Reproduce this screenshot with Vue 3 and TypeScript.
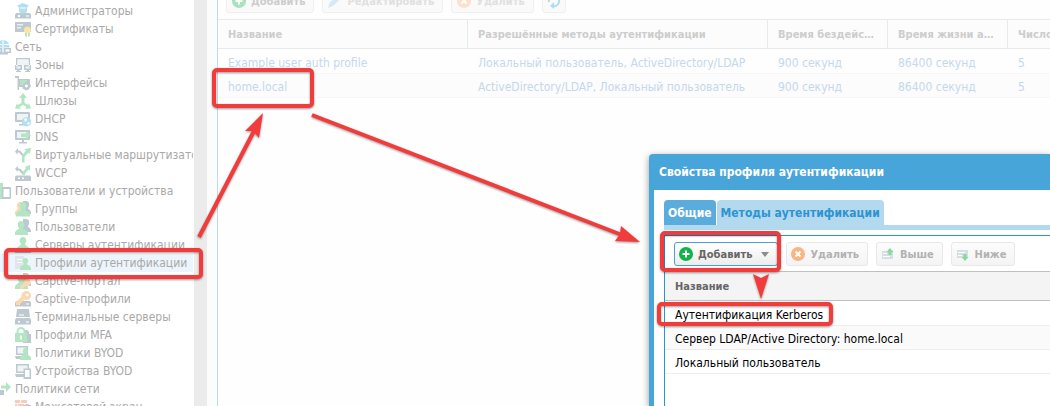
<script setup lang="ts">
type Shape = [fill: string, d: string]
interface TreeRow {
  label: string
  icon: string
  group?: boolean
  selected?: boolean
}

const slate = '#bdc9d1'
const pale = '#e9eef1'
const green = '#b2e6c3'
const blue = '#b3dff2'
const orange = '#fbd8ae'
const white = '#ffffff'

const person =
  'M8 1c2 0 3.400 1.500 3.400 3.600S10.200 8 10 8.800c-.2 1.400 5 1.400 5 5.200v1.500H1V14c0-3.800 5.200-3.800 5-5.200C5.800 8 4.600 6.700 4.600 4.600S6 1 8 1z'
const personSmall =
  'M10.500 3c1.500 0 2.600 1.200 2.600 2.800s-1 2.500-1.100 3.200c-.1 1.200 4 1.300 4 4.500V15H5v-1.500C5 10.300 9.100 10.200 9 9c-.1-.7-1.100-1.600-1.100-3.200S9 3 10.500 3z'
const personRight =
  'M11 0c2 0 3.200 1.400 3.200 3.300S13.200 6.500 13 7.300c-.2 1.200 3 1.500 3 4.700v1H8V0z'
const personLeft =
  'M6 2c2 0 3.300 1.400 3.300 3.300S8.200 8.500 8 9.300c-.2 1.400 5 1.400 5 5.200V16H0v-1.500c0-3.800 4.200-3.800 4-5.200-.2-.8-1.300-2.100-1.300-4S4 2 6 2z'
const rack = 'M1 10h14l1 2v3.500H0V12zM3 12v2h2v-2zM11 12.500h3v1h-3z'
const screen = 'M1 1h13a1 1 0 0 1 1 1v8a1 1 0 0 1-1 1H9v2h3v1.500H4V13h3v-2H1a1 1 0 0 1-1-1V2a1 1 0 0 1 1-1z'
const key = 'M11 0a4.500 4.500 0 1 1-1.500 8.500L4 14H1v-3l5.700-5.500A4.500 4.500 0 0 1 11 0zM12 2.500a1.500 1.500 0 1 0 .1 0z'
const fork = 'M7 14V9L4 5.500H2.500V8L0 4.500 3 1v2.500h2L8.500 7.500V14z'
const forkGreen = 'M7 15.500V8.500l4-5-1.500-1.500L16 1l-1 6-1.500-1.500L9.500 10v5.500z'

const icons: Record<string, Shape[]> = {
  admin: [
    [slate, rack],
    [blue, 'M8 0l6 2.500-2 2v3a4 3 0 0 1-8 0v-3l-2-2z'],
    [white, 'M5 4.500h6v1H5z'],
  ],
  cert: [
    [slate, 'M0 1h16v10H0z'],
    [pale, 'M2 3h6v1.500H2zM2 6h4v1.500H2z'],
    [green, 'M10 11h2v5l-2-1zM13 11h2v4l-2 1z'],
    ['#fde6a3', 'M12.500 5.500a3.500 3.500 0 1 1-.1 0z'],
  ],
  net: [
    [blue, 'M8 1a6.500 6.500 0 1 1-.1 0z'],
    [white, 'M7.500 1h1v12h-1zM2 5h12v1H2zM2 8.500h12v1H2z'],
    [slate, 'M1 9h6v5H1zM9 9h7v5H9zM4 14h9v1.500H4z'],
    [white, 'M2.500 10.500h3v2h-3zM10.500 10.500h4v2h-4z'],
  ],
  zones: [
    [slate, 'M1 1h14v8h-1.500V2.500h-11V9H1zM0 8h7v5H4.500v1H6v1H1v-1h1v-1H0zM9 8h7v5h-2v1h1v1h-5v-1h1.500v-1H9z'],
    ['#f1f4f7', 'M2.500 2.500h11V8H9v1H7V8H2.500zM1.500 9.500h4v2h-4zM10.500 9.500h4v2h-4z'],
  ],
  iface: [
    [slate, 'M0 1h4v3h11v8H4v3H2.500V3H0z'],
    [green, 'M5 5h7v5H5z'],
    [slate, 'M11 6.500l2 .2.500 1.300 1.500.300.5 2 .5 1.500-1.500 1-.5 1.700-2 .5-1.500.5-1.500-1.200-1.500-.8V11l.5-1.700 1-.8z'],
    [white, 'M11.500 9.500a1.500 1.500 0 1 1-.1 0z'],
  ],
  gateway: [[green, 'M6.500 10V5H4l4-5 4 5H9.500v5l4 2 .5-2 2 5.500-6 .5 1.500-2L8 12l-3.500 2L6 16l-6-.5L2 10l.5 2z']],
  dhcp: [
    [slate, screen],
    ['#f1f4f7', 'M2 3h11v6H2z'],
    [blue, 'M11.500 6a4.700 4.700 0 1 1-.1 0z'],
    [white, 'M9 8l2.500-1 .5 2-2 2zM12 12l2-1 1 1-2 2z'],
  ],
  dns: [
    [slate, screen],
    ['#f1f4f7', 'M2 3h11v6H2z'],
    [green, 'M6 4.500h5V2l5 4.200-5 4.300V8H6z'],
  ],
  vrouter: [
    [slate, fork],
    [green, forkGreen],
  ],
  wccp: [
    [slate, 'M1 10.500h14l1 1.500v4H0v-4zM3 12.500V14h2v-1.500zM7 12.500V14h2v-1.500z'],
    [slate, 'M7 9L4 5.500H2.500V7L0 3.800 3 1v2.500h2L8.500 7v3z'],
    [green, 'M7.500 10V7.500L11 3 9.500 2 15 0v6l-1.500-1.500L10 8.500V10z'],
  ],
  users: [
    [green, 'M0 0h8v16H0z'],
    [slate, 'M7 4h8a1 1 0 0 1 1 1v10a1 1 0 0 1-1 1H7z'],
    [white, 'M8.500 6h6v8h-6z'],
  ],
  groups: [
    [orange, 'M5 1c2 0 3 1.400 3 3.300L6 10v4H0v-2c0-3 3-3 3-4.500C2.500 6.500 2 5.500 2 4.300 2 2.400 3 1 5 1z'],
    [slate, personRight],
    [green, person],
  ],
  user: [
    [slate, personRight],
    [green, personLeft],
  ],
  authserver: [
    [slate, 'M1 12h14l1 2v2H0v-2z'],
    [green, 'M8 0c2 0 3.300 1.400 3.300 3.300S10.200 6.500 10 7.300C9.800 8.700 14 8.700 14 12v1H2v-1c0-3.300 4.200-3.300 4-4.700-.2-.8-1.300-2.100-1.300-4S6 0 8 0z'],
  ],
  authprofile: [
    ['#dfe7ec', 'M0 1h9v13H0z'],
    [white, 'M2 4h5v1H2zM2 7h5v1H2z'],
    [green, personSmall],
  ],
  portal: [
    [slate, personRight],
    [green, personLeft],
    [orange, 'M12 6a3.500 3.500 0 1 1-1 6.800L7.500 16H5v-2.500L8.700 10A3.500 3.500 0 0 1 12 6z'],
  ],
  cprofile: [
    [slate, rack],
    [orange, key],
  ],
  terminal: [
    [slate, 'M2 0h12l1 8H1zM1 9h14l1 2v4.500H0V11z'],
    [white, 'M4 5.500h5v1H4zM3 12h2v1.500H3zM11 12.500h3v1h-3z'],
  ],
  mfa: [
    [slate, 'M8 6h1V4a3 3 0 0 1 5 1v2h2v9H8z'],
    [green, 'M0 6h1.500V4.500a4.500 4.500 0 0 1 9 0V6H12v9H0zM3.500 6h5V4.500a2.500 2.500 0 0 0-5 0z'],
    [white, 'M5.200 8.500h1.600v4H5.200z'],
  ],
  byodpolicy: [
    [slate, 'M1 1h12v9H1zM0 11h11l-1 3H1z'],
    ['#f1f4f7', 'M2.500 2.500h9v6h-9z'],
    [green, personSmall],
  ],
  byoddevice: [
    [slate, 'M1 1h13v9H1zM0 11h9v3H1z'],
    ['#f1f4f7', 'M2.500 2.500h10v6h-10z'],
    [slate, 'M8.500 5.500H16V16H8.500z'],
    [white, 'M10 7h4.500v7H10z'],
  ],
  policy: [
    [slate, 'M0 9h9v5H0z'],
    [green, 'M6 4.500h5V1l5 5-5 5V7.500H6z'],
  ],
  firewall: [
    ['#f9cbb8', 'M0 1h5v3H0zM6 1h6v3H6zM0 5h2v3H0zM3 5h6v3H3zM10 5h4v3h-4zM0 9h6v3H0z'],
    [slate, 'M8 6h8v9H8z'],
  ],
}

const tree: TreeRow[] = [
  { label: 'Администраторы', icon: 'admin' },
  { label: 'Сертификаты', icon: 'cert' },
  { label: 'Сеть', icon: 'net', group: true },
  { label: 'Зоны', icon: 'zones' },
  { label: 'Интерфейсы', icon: 'iface' },
  { label: 'Шлюзы', icon: 'gateway' },
  { label: 'DHCP', icon: 'dhcp' },
  { label: 'DNS', icon: 'dns' },
  { label: 'Виртуальные маршрутизаторы', icon: 'vrouter' },
  { label: 'WCCP', icon: 'wccp' },
  { label: 'Пользователи и устройства', icon: 'users', group: true },
  { label: 'Группы', icon: 'groups' },
  { label: 'Пользователи', icon: 'user' },
  { label: 'Серверы аутентификации', icon: 'authserver' },
  { label: 'Профили аутентификации', icon: 'authprofile', selected: true },
  { label: 'Captive-портал', icon: 'portal' },
  { label: 'Captive-профили', icon: 'cprofile' },
  { label: 'Терминальные серверы', icon: 'terminal' },
  { label: 'Профили MFA', icon: 'mfa' },
  { label: 'Политики BYOD', icon: 'byodpolicy' },
  { label: 'Устройства BYOD', icon: 'byoddevice' },
  { label: 'Политики сети', icon: 'policy', group: true },
  { label: 'Межсетевой экран', icon: 'firewall' },
]

const columns = ['Название', 'Разрешённые методы аутентификации', 'Время бездействия', 'Время жизни аутентификации', 'Число']
const profiles = [
  ['Example user auth profile', 'Локальный пользователь, ActiveDirectory/LDAP', '900 секунд', '86400 секунд', '5'],
  ['home.local', 'ActiveDirectory/LDAP, Локальный пользователь', '900 секунд', '86400 секунд', '5'],
]
const methods = ['Аутентификация Kerberos', 'Сервер LDAP/Active Directory: home.local', 'Локальный пользователь']
</script>

<template>
  <div class="screen">
    <nav class="sidebar">
      <ul class="tree">
        <li v-for="row in tree" :key="row.label">
          <a href="#" class="node" :class="{ group: row.group, selected: row.selected }">
            <svg class="icon" viewBox="0 0 16 16" aria-hidden="true">
              <path v-for="(s, i) in icons[row.icon]" :key="i" :fill="s[0]" :d="s[1]" fill-rule="evenodd" />
            </svg>
            <span>{{ row.label }}</span>
          </a>
        </li>
      </ul>
      <div class="scrollbar"></div>
    </nav>

    <main class="panel">
      <div class="toolbar clipped">
        <button class="btn faded">
          <svg class="icon" viewBox="0 0 16 16" aria-hidden="true">
            <circle cx="8" cy="8" r="7" fill="#a9e3bb" />
            <path d="M8 4.500v7M4.500 8h7" stroke="#fff" stroke-width="2" />
          </svg>
          Добавить
        </button>
        <button class="btn faded dim" disabled>
          <svg class="icon" viewBox="0 0 16 16" aria-hidden="true">
            <path d="M1 15l1.500-5L11 1.500 14.500 5 6 13z" fill="#d5e9f7" />
          </svg>
          Редактировать
        </button>
        <button class="btn faded dim" disabled>
          <svg class="icon" viewBox="0 0 16 16" aria-hidden="true">
            <circle cx="8" cy="8" r="7" fill="#fddfca" />
            <path d="M5.500 5.500l5 5M10.500 5.500l-5 5" stroke="#fff" stroke-width="2" />
          </svg>
          Удалить
        </button>
        <button class="btn faded square" aria-label="Обновить">
          <svg class="icon" viewBox="0 0 16 16" aria-hidden="true">
            <path d="M3 9a5 5 0 0 1 7-5.500M13 7a5 5 0 0 1-6 6" fill="none" stroke="#afdcf2" stroke-width="2" />
            <path d="M9 0l4 4-4 3zM8 9l-4 4 4 3z" fill="#afdcf2" />
          </svg>
        </button>
      </div>
      <table class="grid main-grid">
        <colgroup>
          <col class="c-name" />
          <col class="c-methods" />
          <col class="c-time" />
          <col class="c-time" />
          <col />
        </colgroup>
        <thead>
          <tr>
            <th v-for="c in columns" :key="c">{{ c }}</th>
          </tr>
        </thead>
        <tbody>
          <tr v-for="p in profiles" :key="p[0]">
            <td v-for="(v, i) in p" :key="i">{{ v }}</td>
          </tr>
        </tbody>
      </table>
    </main>

    <section class="dialog" role="dialog" aria-labelledby="dialog-title">
      <h2 id="dialog-title" class="title">Свойства профиля аутентификации</h2>
      <div class="content">
        <div class="tabs" role="tablist">
          <button class="tab" role="tab" aria-selected="false">Общие</button>
          <button class="tab active" role="tab" aria-selected="true">Методы аутентификации</button>
        </div>
        <div class="inner">
          <div class="toolbar">
            <button class="btn focused">
              <svg class="icon" viewBox="0 0 16 16" aria-hidden="true">
                <circle cx="8" cy="8" r="7" fill="#12b34b" />
                <path d="M8 4.500v7M4.500 8h7" stroke="#fff" stroke-width="2" />
              </svg>
              Добавить
              <svg class="caret" viewBox="0 0 8 5" aria-hidden="true"><path d="M0 0h8L4 5z" fill="#8c8c8c" /></svg>
            </button>
            <button class="btn" disabled>
              <svg class="icon" viewBox="0 0 16 16" aria-hidden="true">
                <circle cx="8" cy="8" r="7" fill="#fcb482" />
                <path d="M5.500 5.500l5 5M10.500 5.500l-5 5" stroke="#fff" stroke-width="2" />
              </svg>
              Удалить
            </button>
            <button class="btn" disabled>
              <svg class="icon" viewBox="0 0 16 16" aria-hidden="true">
                <path d="M2 5h11v8H2z" fill="#d5dee3" />
                <path d="M3 7.500h4M3 10.500h7" stroke="#fff" stroke-width="1" />
                <path d="M10 2l3.500 4H11.500v3h-3V6H6.500z" fill="#83d9a0" />
              </svg>
              Выше
            </button>
            <button class="btn" disabled>
              <svg class="icon" viewBox="0 0 16 16" aria-hidden="true">
                <path d="M2 4h11v8H2z" fill="#d5dee3" />
                <path d="M3 6.500h7M3 9.500h4" stroke="#fff" stroke-width="1" />
                <path d="M8.500 8h3v3h2L10 15l-3.500-4h2z" fill="#83d9a0" />
              </svg>
              Ниже
            </button>
          </div>
          <table class="grid dialog-grid">
            <thead>
              <tr><th>Название</th></tr>
            </thead>
            <tbody>
              <tr v-for="m in methods" :key="m"><td>{{ m }}</td></tr>
            </tbody>
          </table>
        </div>
      </div>
    </section>

    <svg class="marks" width="1050" height="406" viewBox="0 0 1050 406" aria-hidden="true">
      <g fill="none" stroke="#f23b3b" stroke-width="4">
        <rect x="214" y="70" width="98" height="36" rx="3" />
        <rect x="6" y="250" width="195" height="27" rx="3" />
        <rect x="662" y="233" width="117" height="37" rx="3" />
        <rect x="659" y="304" width="172" height="20" rx="3" />
        <path d="M199 237L254 131M312 115L622 235" />
      </g>
      <g fill="#f23b3b">
        <path d="M263 113L245 131L253 131L259 138z" />
        <path d="M640 242L621 226L620 234L615 241z" />
        <path d="M761 299L753 274L761 278L769 274z" />
      </g>
    </svg>
  </div>
</template>

<style scoped>
.screen {
  position: relative;
  display: flex;
  height: 100vh;
  overflow: hidden;
  background: #fcfcfc;
  font-family: "DejaVu Sans Condensed", "DejaVu Sans", sans-serif;
  font-size: 12px;
}
.sidebar {
  display: flex;
  flex: none;
  width: 207px;
  margin-right: 10px;
  background: #fff;
}
.tree {
  flex: 1;
  min-width: 0;
  margin: 0 1px 0 0;
  padding: 2px 0 0;
  list-style: none;
}
.scrollbar {
  width: 13px;
  background: #ebebeb;
}
.node {
  display: flex;
  align-items: center;
  gap: 4px;
  height: 18px;
  padding-left: 15px;
  overflow: hidden;
  color: #a9a9a9;
  text-decoration: none;
  white-space: nowrap;
}
.node.group {
  margin-left: -20px;
}
.node.selected {
  background: #edf4fb;
}
.icon {
  flex: none;
  width: 16px;
  height: 16px;
}
.panel {
  flex: 1;
  min-width: 0;
  overflow: hidden;
  border-left: 1px solid #bfdcea;
  background: #fefefe;
}
.toolbar {
  display: flex;
  gap: 8px;
  padding: 6px 9px 5px;
}
.toolbar.clipped {
  margin-top: -17px;
  padding: 6px 8px;
}
.btn {
  display: flex;
  align-items: center;
  gap: 4px;
  height: 24px;
  padding: 0 8px 0 3px;
  border: 1px solid #e8e8e8;
  border-radius: 3px;
  background: linear-gradient(#fcfcfc, #f4f4f4);
  color: #666;
  font: bold 11px "DejaVu Sans Condensed", "DejaVu Sans", sans-serif;
  white-space: nowrap;
}
.btn:disabled {
  color: #b2b2b2;
}
.btn.faded {
  padding-left: 4px;
  border-color: #efefef;
  background: #fafafa;
  color: #cdcdcd;
}
.btn.faded.dim {
  color: #e0e0e0;
}
.btn.faded.square {
  padding: 0 3px;
}
.btn.focused {
  border-color: #4a9fd4;
  background: linear-gradient(#fff, #ededed);
}
.caret {
  width: 8px;
  height: 5px;
  margin-left: 5px;
}
.grid {
  width: 100%;
  border-collapse: separate;
  border-spacing: 0;
  table-layout: fixed;
}
.grid th,
.grid td {
  padding: 0 10px;
  border-bottom: 1px solid #ededed;
  overflow: hidden;
  text-align: left;
  text-overflow: ellipsis;
  white-space: nowrap;
}
.grid td {
  height: 21px;
  padding-top: 2px;
}
.grid th {
  height: 28px;
  border-top: 1px solid #e9e9e9;
  border-bottom-color: #e9e9e9;
  font-size: 11px;
}
.grid tbody tr:first-child td {
  height: 20px;
  padding-top: 4px;
}
.grid tbody tr:nth-child(even) td {
  background: #fafafa;
}
.c-name {
  width: 250px;
}
.c-methods {
  width: 300px;
}
.c-time {
  width: 120px;
}
.main-grid th {
  border-right: 1px solid #e9e9e9;
  background: #fcfcfc;
  color: #cdcdcd;
}
.main-grid th:last-child {
  padding-right: 0;
  border-right: 0;
  text-overflow: clip;
}
.main-grid td {
  border-bottom-color: #f7f7f7;
  color: #c5d8ec;
}
.main-grid tbody tr:nth-child(even) td {
  background: #fcfcfc;
}
.dialog {
  position: absolute;
  top: 154px;
  right: 0;
  bottom: 0;
  left: 649px;
  display: flex;
  flex-direction: column;
  border-left: 5px solid #48a5d9;
  border-radius: 4px 0 0 0;
  background: #fff;
  box-shadow: 0 2px 7px rgba(0, 0, 0, 0.4);
}
.title {
  margin: 0;
  padding: 0 5px;
  background: #48a5d9;
  color: #fff;
  font-size: 12px;
  line-height: 36px;
}
.content {
  display: flex;
  flex: 1;
  flex-direction: column;
  padding: 10px 0 0 10px;
}
.tabs {
  display: flex;
  gap: 1px;
  margin-bottom: 5px;
  border-bottom: 5px solid #b3d9ef;
}
.tab {
  height: 25px;
  padding: 0 4px;
  border: 0;
  border-radius: 4px 4px 0 0;
  background: #5aacdc;
  color: #fff;
  font: bold 12px "DejaVu Sans Condensed", "DejaVu Sans", sans-serif;
}
.tab.active {
  background: #b3d9ef;
  color: #2d93d1;
}
.inner {
  flex: 1;
  border-top: 1px solid #2896d2;
  border-left: 1px solid #2896d2;
}
.dialog-grid th {
  border-top-color: #c0c0c0;
  border-bottom-color: #c0c0c0;
  background: #f4f4f4;
  color: #666;
}
.dialog-grid td {
  color: #000;
}
.marks {
  position: absolute;
  top: 0;
  left: 0;
  filter: drop-shadow(0 1px 1px rgba(0, 0, 0, 0.4));
  pointer-events: none;
}
</style>
